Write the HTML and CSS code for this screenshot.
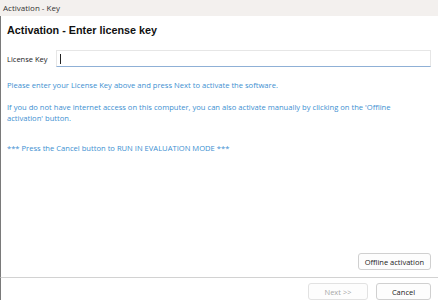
FILE: index.html
```html
<!DOCTYPE html>
<html>
<head>
<meta charset="utf-8">
<link rel="stylesheet" href="styles.css">
</head>
<body>
<div class="window">
  <div class="titlebar">Activation - Key</div>
  <div class="content">
    <h1 class="heading">Activation - Enter license key</h1>
    <div class="field">
      <label class="label">License Key</label>
      <div class="input"><span class="caret"></span></div>
    </div>
    <p class="info first">Please enter your License Key above and press Next to activate the software.</p>
    <p class="info">If you do not have internet access on this computer, you can also activate manually by clicking on the 'Offline activation' button.</p>
    <p class="info eval">*** Press the Cancel button to RUN IN EVALUATION MODE ***</p>
    <div class="spacer"></div>
    <div class="offline-row"><button class="btn">Offline activation</button></div>
  </div>
  <div class="footer">
    <button class="btn disabled">Next &gt;&gt;</button>
    <button class="btn cancel">Cancel</button>
  </div>
</div>
</body>
</html>
```
FILE: styles.css
```css
html, body {
  margin: 0;
  padding: 0;
  width: 438px;
  height: 300px;
  overflow: hidden;
  background: #ffffff;
  font-family: "Open Sans", "Noto Sans", sans-serif;
}
* {
  box-sizing: border-box;
}
.window {
  display: flex;
  flex-direction: column;
  height: 300px;
}
.titlebar {
  height: 16px;
  background: #f3f0ee;
  font-size: 8px;
  line-height: 16px;
  padding-left: 3px;
  color: #333;
}
.content {
  flex: 1;
  display: flex;
  flex-direction: column;
  border-left: 1px solid #7a7a7a;
  padding: 0 7px 0 6px;
}
.heading {
  margin: 6px 0 0 0;
  font-family: "Liberation Sans", Arial, sans-serif;
  font-weight: bold;
  font-size: 10.8px;
  line-height: 16px;
  color: #111;
}
.field {
  display: flex;
  align-items: center;
  margin-top: 12px;
}
.label {
  font-size: 7.5px;
  color: #222;
  width: 49px;
}
.input {
  flex: 1;
  height: 17px;
  border: 1px solid #e6e6e6;
  border-bottom: 1px solid #8fb0d6;
  display: flex;
  align-items: center;
  padding-left: 3px;
}
.caret {
  width: 1px;
  height: 10px;
  background: #222;
}
.info {
  margin: 0;
  max-width: 398px;
  font-size: 7.6px;
  line-height: 11px;
  color: #3d8fd1;
}
.info.first {
  margin-top: 13px;
}
.info + .info {
  margin-top: 11px;
}
.info.eval {
  margin-top: 19px;
}
.spacer {
  flex: 1;
}
.offline-row {
  display: flex;
  justify-content: flex-end;
  margin-bottom: 7px;
}
.btn {
  font-family: "Open Sans", "Noto Sans", sans-serif;
  font-size: 7.5px;
  height: 17px;
  padding: 0 6px;
  background: #fdfdfd;
  border: 1px solid #d0d0d0;
  border-radius: 3px;
  color: #222;
}
.footer {
  height: 23px;
  border-top: 1px solid #d2d2d2;
  border-left: 1px solid #7a7a7a;
  display: flex;
  justify-content: flex-end;
  align-items: flex-start;
  gap: 8px;
  padding: 5px 7px 0 0;
}
.btn.disabled {
  width: 60px;
  color: #a8a8a8;
  border-color: #e2e2e2;
}
.btn.cancel {
  width: 55px;
}
```
